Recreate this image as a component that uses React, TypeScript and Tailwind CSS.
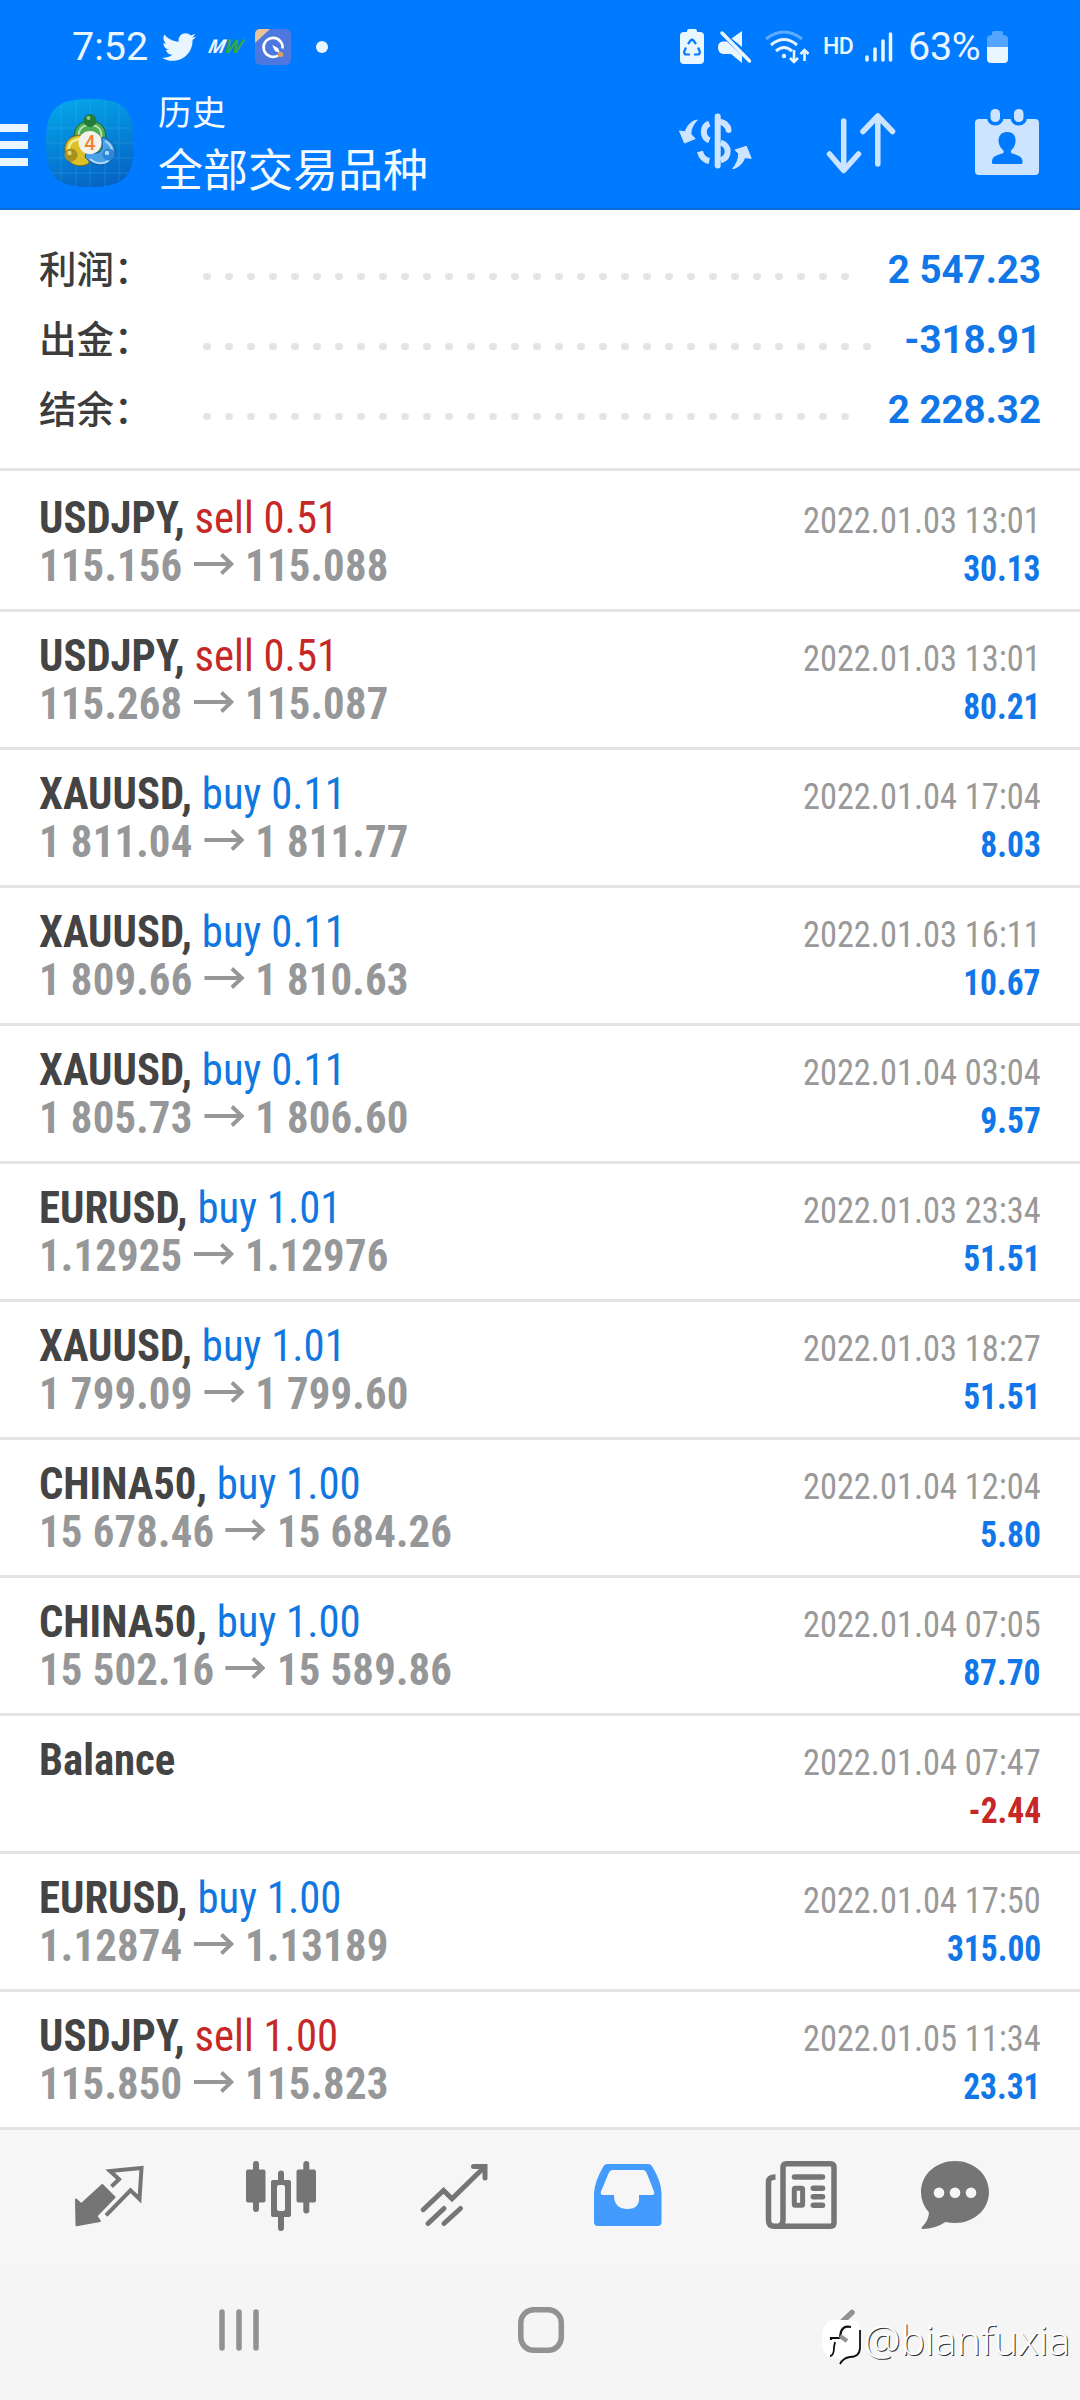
import { FaTwitter } from "react-icons/fa";

interface Deal {
  symbol: string;
  side?: "buy" | "sell";
  volume?: string;
  from?: string;
  to?: string;
  time: string;
  profit: string;
}

const summary = [
  { label: "利润：", value: "2 547.23", dots: 30 },
  { label: "出金：", value: "-318.91", dots: 31 },
  { label: "结余：", value: "2 228.32", dots: 30 },
];

const deals: Deal[] = [
  { symbol: "USDJPY", side: "sell", volume: "0.51", from: "115.156", to: "115.088", time: "2022.01.03 13:01", profit: "30.13" },
  { symbol: "USDJPY", side: "sell", volume: "0.51", from: "115.268", to: "115.087", time: "2022.01.03 13:01", profit: "80.21" },
  { symbol: "XAUUSD", side: "buy", volume: "0.11", from: "1 811.04", to: "1 811.77", time: "2022.01.04 17:04", profit: "8.03" },
  { symbol: "XAUUSD", side: "buy", volume: "0.11", from: "1 809.66", to: "1 810.63", time: "2022.01.03 16:11", profit: "10.67" },
  { symbol: "XAUUSD", side: "buy", volume: "0.11", from: "1 805.73", to: "1 806.60", time: "2022.01.04 03:04", profit: "9.57" },
  { symbol: "EURUSD", side: "buy", volume: "1.01", from: "1.12925", to: "1.12976", time: "2022.01.03 23:34", profit: "51.51" },
  { symbol: "XAUUSD", side: "buy", volume: "1.01", from: "1 799.09", to: "1 799.60", time: "2022.01.03 18:27", profit: "51.51" },
  { symbol: "CHINA50", side: "buy", volume: "1.00", from: "15 678.46", to: "15 684.26", time: "2022.01.04 12:04", profit: "5.80" },
  { symbol: "CHINA50", side: "buy", volume: "1.00", from: "15 502.16", to: "15 589.86", time: "2022.01.04 07:05", profit: "87.70" },
  { symbol: "Balance", time: "2022.01.04 07:47", profit: "-2.44" },
  { symbol: "EURUSD", side: "buy", volume: "1.00", from: "1.12874", to: "1.13189", time: "2022.01.04 17:50", profit: "315.00" },
  { symbol: "USDJPY", side: "sell", volume: "1.00", from: "115.850", to: "115.823", time: "2022.01.05 11:34", profit: "23.31" },
];

function StatusBar() {
  return (
    <div className="flex h-[85px] items-center pt-2 pl-[72px] pr-[72px] text-[#eaf6ff]">
      <span className="w-[90px] text-[39.500px] leading-none">7:52</span>
      <FaTwitter className="h-[34px] w-[34px]" />
      <span className="ml-[13px] w-[37px] -skew-x-12 font-['Open_Sans'] text-[19px] leading-none font-bold italic tracking-[-0.5px]">
        M<span className="text-[#35a83f]">W</span>
      </span>
      <svg className="ml-[9px] h-9 w-9" viewBox="0 0 36 36">
        <rect width="36" height="36" rx="5" fill="#4d78e0" />
        <path d="M0 14V5a5 5 0 0 1 5-5h10z" fill="#e8c39a" />
        <path d="M23 26.500a9.500 9.500 0 1 1 4.500-7" fill="none" stroke="#fff" strokeWidth="2.600" />
        <path d="M17 16l6 3 2 5-5-2z" fill="#fff" />
        <circle cx="25.500" cy="25.500" r="2.800" fill="#d9a05b" />
      </svg>
      <span className="ml-[25px] h-3 w-3 rounded-full bg-[#eaf6ff]" />

      <div className="ml-auto flex items-center">
        <svg className="h-[35px] w-6" viewBox="0 0 24 35" fill="currentColor">
          <path d="M7 3V2a2 2 0 0 1 2-2h6a2 2 0 0 1 2 2v1h3a4 4 0 0 1 4 4v24a4 4 0 0 1-4 4H4a4 4 0 0 1-4-4V7a4 4 0 0 1 4-4z" />
          <path
            d="M8 15l2.500-3.500q1.500-1.500 3 0L16 15M18 18.500l1.800 4q.3 3-2.300 3H14M6 18.500l-1.800 4q-.3 3 2.300 3H10"
            fill="none"
            stroke="#007aff"
            strokeWidth="2.200"
          />
        </svg>
        <svg className="ml-[14px] h-[34px] w-[34px]" viewBox="0 0 34 34" fill="currentColor">
          <path d="M24 1v16L13.500 8.500zM9 11.500l15 14V33L13 24H5q-5-1-5-6.500T5 11.500z" />
          <path d="M4 3l27.500 28" stroke="currentColor" strokeWidth="3.500" strokeLinecap="round" />
        </svg>
        <svg className="ml-3 h-[34px] w-[46px]" viewBox="0 0 46 34" fill="none" stroke="currentColor" strokeWidth="3">
          <path d="M2 9Q20-5 38 9" opacity=".4" />
          <path d="M7 15q13-11 26 0M12 21q8-7 16 0" />
          <circle cx="20" cy="26" r="2.200" fill="currentColor" stroke="none" />
          <path d="M30 20v12M26 28l4 4 4-4M40.500 31V20M36.500 24l4-4 4 4" strokeWidth="2.600" />
        </svg>
        <span className="ml-[13px] w-[30px] text-[23px] leading-none font-medium tracking-[-0.5px]">HD</span>
        <svg className="ml-3 h-[30px] w-7" viewBox="0 0 28 30" stroke="currentColor" strokeWidth="3.500" strokeLinecap="round">
          <path d="M2 25v3M10 17v11M18 9v19M25.500 2v26" />
        </svg>
        <span className="ml-[15px] w-[79px] text-[39.500px] leading-none tracking-[-0.3px]">63%</span>
        <svg className="h-8 w-[21px]" viewBox="0 0 21 32">
          <path d="M5 4V2a2 2 0 0 1 2-2h7a2 2 0 0 1 2 2v2q5 0 5 4v8H0V8q0-4 5-4z" fill="#55a5ff" />
          <path d="M0 16h21v12a4 4 0 0 1-4 4H4a4 4 0 0 1-4-4z" fill="currentColor" />
        </svg>
      </div>
    </div>
  );
}

function AppLogo() {
  return (
    <svg className="ml-[18px] h-[88px] w-[88px]" viewBox="0 0 88 88">
      <defs>
        <linearGradient id="tile" x1="0.3" y1="0" x2="0.6" y2="1">
          <stop offset="0" stopColor="#04a4ea" />
          <stop offset="1" stopColor="#0663c4" />
        </linearGradient>
      </defs>
      <path d="M44 0c34 0 44 10 44 44S78 88 44 88 0 78 0 44 10 0 44 0z" fill="url(#tile)" />
      <path d="M2 29h84M0 44h88M2 59h84M6 74h76M15 6v76M30 1v86M44 0v88M59 1v86M73 6v76" stroke="#4fc0f5" strokeOpacity=".25" strokeWidth="1" />
      {/* three figures round the version badge */}
      <path d="M29 42c-3-11 3-20 15-20s18 9 15 21c-2 8-7 12-12 11z" fill="#4cab55" stroke="#1d5f33" />
      <path d="M33 40c-2-9 3-14 11-14s13 5 11 14" fill="none" stroke="#b5e5ab" strokeWidth="2" />
      <path d="M36 36c-12 0-18 7-17 16 1 12 12 18 23 13l4-8z" fill="#dcc02a" stroke="#77671a" />
      <path d="M34 40c-9 1-12 6-11 12" fill="none" stroke="#f5eb8c" strokeWidth="2.500" />
      <path d="M56 38c11 3 15 12 12 19-5 11-20 12-29 1l2-6c7 4 13 2 15-2z" fill="#4ba0e6" stroke="#165591" />
      <path d="M59 42c7 4 8 10 5 16M44 60c7 6 15 5 19 1" fill="none" stroke="#a9d8fa" strokeWidth="2" />
      <circle cx="44" cy="21.500" r="6.500" fill="#237b38" />
      <circle cx="42.500" cy="19" r="2" fill="#8ccb87" />
      <circle cx="25" cy="56" r="6.500" fill="#a69021" />
      <circle cx="23.500" cy="54" r="2.200" fill="#e8da6a" />
      <circle cx="62.500" cy="55.500" r="6" fill="#2f86d6" />
      <circle cx="61" cy="54" r="2.200" fill="#a9d8fa" />
      <circle cx="44" cy="43.500" r="11.500" fill="#f3f1ee" />
      <text x="44" y="50.500" textAnchor="middle" fontFamily="Roboto" fontSize="20" fontWeight="500" fill="#f08232">
        4
      </text>
    </svg>
  );
}

function TitleBar() {
  return (
    <div className="flex h-[115px] items-center pr-[33px]">
      <div className="mt-1 flex w-7 flex-col gap-[9px]">
        <span className="h-2 bg-[#eaf6ff]" />
        <span className="h-2 bg-[#eaf6ff]" />
        <span className="h-2 bg-[#eaf6ff]" />
      </div>
      <AppLogo />
      <div className="ml-6 font-['Noto_Sans_CJK_SC',sans-serif] text-[#f2faff]">
        <p className="text-[34px] leading-[50px]">历史</p>
        <p className="text-[45px] leading-[64px]">全部交易品种</p>
      </div>
      <div className="ml-auto flex gap-[66px] text-[#cce4ff]">
        <svg className="h-20 w-20" viewBox="0 0 80 80" fill="none" stroke="currentColor" strokeWidth="6">
          <path d="M22.300 17C16.700 18 12.300 22 10.300 28.700L4.500 28 9.500 40l10.700-4.300-4.200-4.400c-.3-5 2.300-10 6.300-14.300zM57.700 65.700c5.600-1 10-5.400 12-11l6.500.6-4.900-12L60 47l3.700 3.700c0 5.600-2.400 10.600-6 15z" fill="currentColor" strokeWidth="1" strokeLinejoin="round" />
          <path d="M42.700 13.500v49" strokeLinecap="round" />
          <path d="M34.300 20.500C27 23.500 27 34 34.300 37.500M25 48.500q2 8 9.300 9.500M45.700 39.500c9.300 3.500 9.300 14.500 0 18" />
          <path d="M44 18.500c5 1 9 4 9.500 8.500" strokeLinecap="round" />
        </svg>
        <svg className="h-20 w-20" viewBox="0 0 80 80" fill="none" stroke="currentColor" strokeWidth="5.500" strokeLinecap="round" strokeLinejoin="round">
          <path d="M22.700 18v49M8.500 51l14.200 16.500L37.500 51M56.800 61V13M42 28.500L56.800 13l14.700 15.500" />
        </svg>
        <svg className="h-20 w-20" viewBox="0 0 80 80" fill="currentColor">
          <rect x="8" y="16" width="64" height="56" rx="4" />
          <rect x="23.500" y="6" width="9.500" height="13" rx="4.500" stroke="#007aff" strokeWidth="7" paintOrder="stroke" />
          <rect x="47" y="6" width="9.500" height="13" rx="4.500" stroke="#007aff" strokeWidth="7" paintOrder="stroke" />
          <path d="M40 29c6 0 9 4 8.500 9.500-.3 4-2 7-4.500 9v2.500c5 2 11 2.500 11.500 8v1.500q0 1.500-1.500 1.500H26.500q-1.500 0-1.500-1.500V58c.5-5.500 6.500-6 11.500-8v-2.500c-2.500-2-4.500-5-5-9C31.500 33 34 29 40 29z" fill="#007aff" />
        </svg>
      </div>
    </div>
  );
}

function SummaryRow({ label, value, dots }: { label: string; value: string; dots: number }) {
  return (
    <div className="flex h-[70px] items-center">
      <span className="w-[164px] pb-[5px] font-['Noto_Sans_CJK_SC',sans-serif] text-[37.500px] leading-[60px] font-medium whitespace-nowrap text-[#3c3c3c]">{label}</span>
      <div className="mt-[14px] flex gap-[14px]">
        {Array.from({ length: dots }, (_, i) => (
          <span key={i} className="h-[7px] w-2 shrink-0 rounded-full bg-[#e4e4e4]" />
        ))}
      </div>
      <span className="ml-auto pt-[2px] text-[38.500px] leading-[60px] font-bold text-[#1177e8]">{value}</span>
    </div>
  );
}

function DealRow({ deal }: { deal: Deal }) {
  return (
    <div className="h-[138px] border-b-[3px] border-[#e3e3e3] pt-5 pr-[39px] pl-[39px] font-['Roboto_Condensed']">
      <div className="flex h-12 items-baseline justify-between leading-[48px]">
        <p className="origin-left scale-x-[0.95] text-[45px]">
          <span className="font-bold text-[#444]">
            {deal.symbol}
            {deal.side && ","}
          </span>
          {deal.side && (
            <span className={deal.side === "buy" ? "text-[#1177e0]" : "text-[#c62828]"}>
              {" "}
              {deal.side} {deal.volume}
            </span>
          )}
        </p>
        <span className="origin-right scale-x-[0.93] text-[37px] text-[#999]">{deal.time}</span>
      </div>
      <div className="flex h-12 items-baseline justify-between leading-[48px]">
        <p className="flex origin-left scale-x-[0.95] items-baseline text-[45px] font-bold tracking-[0.200px] text-[#969798]">
          {deal.from ? (
            <>
              {deal.from}
              <svg className="mx-3 h-[22px] w-[42px] -translate-y-[6px]" viewBox="0 0 42 22" fill="none" stroke="currentColor" strokeWidth="4">
                <path d="M0 11h39M29 1.500L39.500 11 29 20.500" />
              </svg>
              {deal.to}
            </>
          ) : (
            "\u00a0"
          )}
        </p>
        <span className={`origin-right scale-x-[0.905] text-[37px] font-bold ${deal.profit.startsWith("-") ? "text-[#c62828]" : "text-[#1177e8]"}`}>{deal.profit}</span>
      </div>
    </div>
  );
}

function TabBar() {
  return (
    <div className="flex h-[134px] gap-[101px] bg-[#f6f6f6] pt-[30px] pl-[72px] text-[#757575]">
      {/* quotes */}
      <svg className="h-[72px] w-[72px]" viewBox="0 0 72 72" fill="none" stroke="currentColor" strokeLinejoin="round">
        <path d="M30.300 25L42.500 37.300 24.400 56l3.500 5L4.500 65.300 4 39.500l5.300 4.800z" fill="currentColor" strokeWidth="2" />
        <path d="M39.500 26.500l7.500-7.200-9-8.300 31.500-3-2 31-9-8.700-24.500 25" strokeWidth="4" strokeLinejoin="miter" />
      </svg>
      {/* charts */}
      <svg className="h-[72px] w-[72px]" viewBox="0 0 72 72" fill="currentColor">
        <rect x="1" y="9.500" width="19.500" height="33" rx="2" />
        <rect x="8" y="1" width="6" height="51" rx="3" />
        <path d="M28 20h5v-6.500a3 3 0 0 1 6 0V20h5q2 0 2 2v33q0 2-2 2h-5v11a3 3 0 0 1-6 0V57h-5q-2 0-2-2V22q0-2 2-2zm6 5q-2 0-2 2v22q0 2 2 2h4q2 0 2-2V27q0-2-2-2z" />
        <rect x="51.500" y="9.500" width="19.500" height="33" rx="2" />
        <rect x="58.300" y="1" width="6" height="52.500" rx="3" />
      </svg>
      {/* trade */}
      <svg className="h-[72px] w-[72px]" viewBox="0 0 72 72" fill="none" stroke="currentColor" strokeWidth="5" strokeLinecap="round">
        <path d="M5.200 49.700L25.500 30.500l8.500 8.200L66.500 7M55.500 6.500H67V18M10 63.500L26 48.500M26 63.500l16.500-15" />
      </svg>
      {/* history, the open tab */}
      <svg className="ml-px h-[72px] w-[72px] text-[#429bfd]" viewBox="0 0 72 72" fill="currentColor" fillRule="evenodd">
        <path d="M16 4h40q3 0 4.500 3Q69 21 69.500 33v29q0 4-4 4H6q-4 0-4-4V33Q3 21 11 7q1.500-3 5-3zm5 6q-3 0-4.300 3L9 31.500q-1 3.500 2 3.500h11v2q1 12 13.500 12T47 37v-2h13q3 0 2-3.500L54.700 13q-1.200-3-4.200-3z" />
      </svg>
      {/* news */}
      <svg className="h-[72px] w-[72px]" viewBox="0 0 72 72" fill="none" stroke="currentColor" strokeWidth="5.500">
        <path d="M10.500 17Q3.500 17 3.500 22v38q0 6.300 6 6.300h56q3.500 0 3.500-3.500v-55q0-4-3.500-4h-44q-3.500 0-3.500 4v52q0 5-4 6.500" />
        <path d="M29.500 17h28M48.300 28.300H57.500M48.300 36.700H57.500M48.300 45.300H57.500" strokeLinecap="round" />
        <rect x="29.300" y="28.300" width="8.300" height="17" rx="1" strokeWidth="5" />
      </svg>
      {/* chat */}
      <svg className="-ml-[19px] h-[72px] w-[72px]" viewBox="0 0 72 72" fill="currentColor">
        <path d="M36 1c19 0 34 13.500 34 31S55 63 36 63q-5 0-9.500-1Q16 69 3.500 69q-2-.5 0-2.500 6-6 6.500-14Q2 43.500 2 32C2 14.500 17 1 36 1z" />
        <g fill="#f6f6f6">
          <circle cx="20" cy="32.700" r="5.300" />
          <circle cx="36" cy="32.700" r="5.300" />
          <circle cx="52" cy="32.700" r="5.300" />
        </g>
      </svg>
    </div>
  );
}

function NavBar() {
  return (
    <div className="relative flex h-[136px] gap-[254px] bg-[#f5f5f5] pt-[42px] pl-[215px] text-[#929292]">
      <svg className="h-12 w-12" viewBox="0 0 48 48" stroke="currentColor" strokeWidth="5.500" strokeLinecap="round">
        <path d="M7 6v36M24 6v36M41 6v36" />
      </svg>
      <svg className="h-12 w-12" viewBox="0 0 48 48" fill="none" stroke="currentColor" strokeWidth="5.500">
        <rect x="3.800" y="3.800" width="40.500" height="40.500" rx="13" />
      </svg>
      <svg className="h-12 w-12" viewBox="0 0 48 48" fill="none" stroke="currentColor" strokeWidth="5.500" strokeLinecap="round" strokeLinejoin="round">
        <path d="M33 6.500L14.500 24 27 36" />
      </svg>

      {/* user tag laid over the back button */}
      <div className="absolute top-[55px] left-[822px] flex items-start">
        <svg className="h-[48px] w-[40px]" viewBox="0 0 40 48">
          <path d="M12 1h16q10 0 10 10v17q0 10-10 10-8 2-9 8-1-2 0-6l-7-1Q0 38 0 22 0 1 12 1z" fill="#fff" />
          <path d="M38 11v17q0 10-10 10-7 1-10 7M8 37q4 0 4-9l1-5" fill="none" stroke="#111" strokeWidth="1.800" />
          <path d="M29 8q-9-2-10.500 7l-.5 4H9v2" fill="none" stroke="#111" strokeWidth="2.200" />
          <path d="M18 17l7 5" stroke="#929292" strokeWidth="4" />
        </svg>
        <span className="-mt-[3px] ml-0.5 font-['Noto_Sans'] text-[41px] leading-[46px] font-light text-white [text-shadow:1px_0.5px_0_#333]">@bianfuxia</span>
      </div>
    </div>
  );
}

export default function App() {
  return (
    <div className="h-[2400px] w-[1080px] overflow-hidden bg-white font-[Roboto,sans-serif]">
      <header className="h-[210px] border-b-2 border-[#0c6cd4] bg-[#007aff]">
        <StatusBar />
        <TitleBar />
      </header>

      <section className="border-b-[3px] border-[#e3e3e3] py-6 pr-[39px] pl-[39px]">
        {summary.map((row) => (
          <SummaryRow key={row.label} {...row} />
        ))}
      </section>

      <main className="pt-[3px]">
        {deals.map((deal, i) => (
          <DealRow key={i} deal={deal} />
        ))}
      </main>

      <TabBar />
      <NavBar />
    </div>
  );
}
